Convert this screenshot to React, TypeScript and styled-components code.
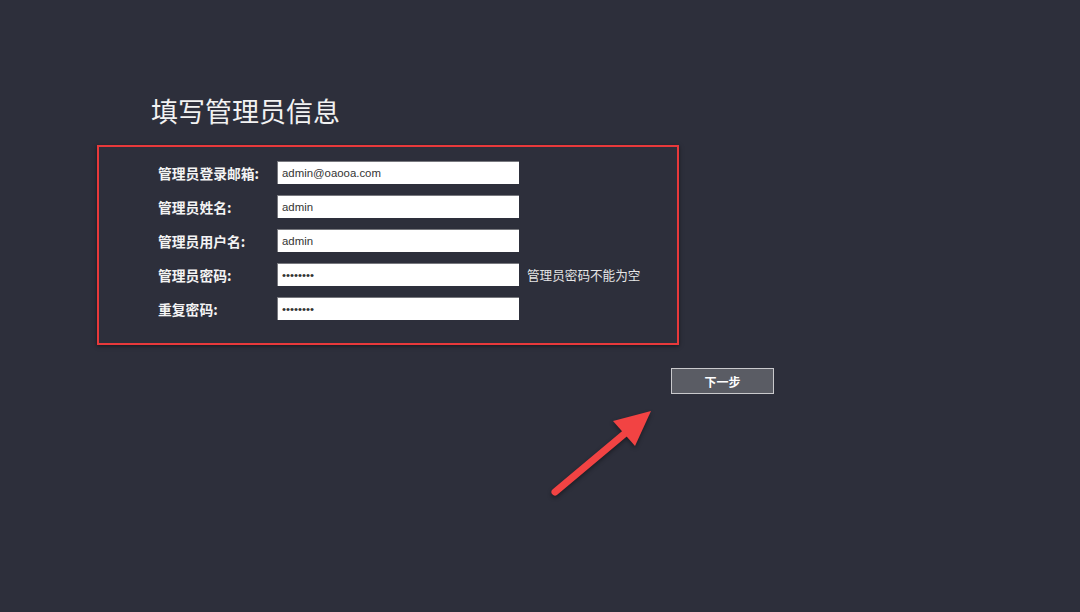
import React from "react";
import styled, { createGlobalStyle } from "styled-components";

const GlobalStyle = createGlobalStyle`
  html, body {
    margin: 0;
    padding: 0;
    background: #2d2f3b;
  }
  body {
    font-family: "Noto Sans CJK SC", "Liberation Sans", sans-serif;
    color: #fff;
  }
`;

const fields = [
  { label: "管理员登录邮箱:", value: "admin@oaooa.com", type: "text" },
  { label: "管理员姓名:", value: "admin", type: "text" },
  { label: "管理员用户名:", value: "admin", type: "text" },
  { label: "管理员密码:", value: "12345678", type: "password", hint: "管理员密码不能为空" },
  { label: "重复密码:", value: "12345678", type: "password" },
];

export default function App() {
  return (
    <>
      <GlobalStyle />
      <Page>
        <Title>填写管理员信息</Title>
        <FormBox>
          {fields.map(f => (
            <Row key={f.label}>
              <Label>{f.label}</Label>
              <Input type={f.type} defaultValue={f.value} readOnly />
              {f.hint && <Hint>{f.hint}</Hint>}
            </Row>
          ))}
        </FormBox>
        <Actions>
          <NextButton>下一步</NextButton>
        </Actions>
        <Arrow width="120" height="100" viewBox="0 0 120 100">
          <line
            x1="10"
            y1="89"
            x2="84"
            y2="27"
            stroke="#f24343"
            strokeWidth="7"
            strokeLinecap="round"
          />
          <polygon points="106,8 68,18 90,43" fill="#f24343" />
        </Arrow>
      </Page>
    </>
  );
}

const Page = styled.div`
  position: relative;
  width: 1080px;
  height: 612px;
  box-sizing: border-box;
  padding: 93px 0 0 97px;
`;

const Title = styled.h1`
  margin: 0 0 0 54px;
  font-size: 27px;
  line-height: 36px;
  font-weight: 400;
  color: #f2f2f2;
`;

const FormBox = styled.div`
  margin-top: 16px;
  width: 582px;
  height: 200px;
  box-sizing: border-box;
  border: 2px solid #e8393b;
  box-shadow: 0 1px 4px rgba(0, 0, 0, 0.5);
  padding: 14px 0 0 59px;
  display: flex;
  flex-direction: column;
  gap: 11px;
`;

const Row = styled.div`
  display: flex;
  align-items: center;
  height: 23px;
`;

const Label = styled.span`
  width: 119px;
  flex: none;
  font-size: 13.8px;
  font-weight: 700;
  color: #f4f4f4;
`;

const Input = styled.input`
  width: 242px;
  height: 23px;
  box-sizing: border-box;
  border: none;
  border-top: 1px solid #77787e;
  border-left: 1px solid #77787e;
  background: #fff;
  padding: 0 4px;
  font-family: "Liberation Sans", Arial, sans-serif;
  font-size: 11.4px;
  color: #333;
  outline: none;
`;

const Hint = styled.span`
  margin-left: 8px;
  font-size: 12.6px;
  color: #e6e6e6;
`;

const Actions = styled.div`
  margin: 23px 0 0 574px;
  display: flex;
`;

const NextButton = styled.button`
  width: 103px;
  height: 26px;
  box-sizing: border-box;
  background: #5a5c64;
  border: 1px solid #c9c9cc;
  color: #fff;
  font-family: "Noto Sans CJK SC", sans-serif;
  font-size: 12px;
  font-weight: 700;
  cursor: pointer;
`;

const Arrow = styled.svg`
  position: absolute;
  left: 545px;
  top: 403px;
  filter: drop-shadow(0 2px 2px rgba(0, 0, 0, 0.4));
`;
